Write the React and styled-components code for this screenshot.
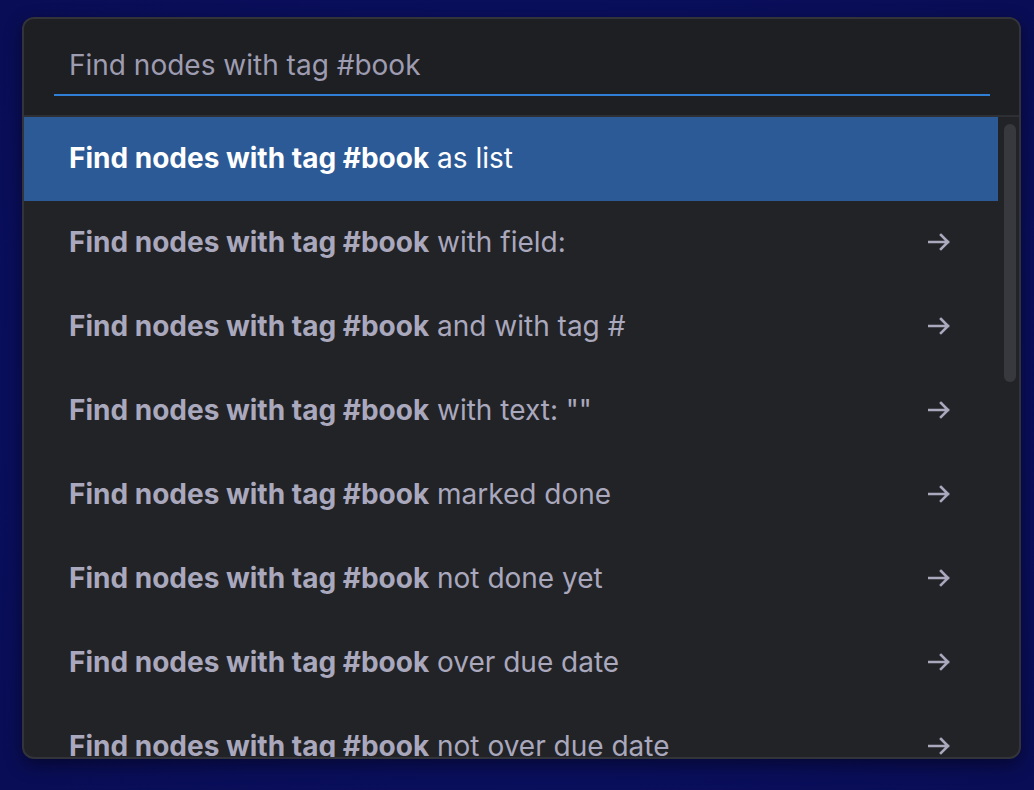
import React from "react";
import styled, { createGlobalStyle } from "styled-components";

const Global = createGlobalStyle`
  html, body { margin: 0; padding: 0; background: #0a0f5e; }
  body { font-family: Inter, "Noto Sans", sans-serif; -webkit-font-smoothing: antialiased; }
  #root { min-height: 790px; }
`;

const Page = styled.div`
  width: 1034px;
  height: 790px;
  padding: 17px 0 0 22px;
  box-sizing: border-box;
  background: radial-gradient(ellipse at center, #0b1166 0%, #0a0f5e 60%, #090d55 100%);
`;

const Panel = styled.div`
  width: 999px;
  height: 742px;
  box-sizing: border-box;
  border: 2px solid #333439;
  border-radius: 12px;
  background: #222327;
  overflow: hidden;
  display: flex;
  flex-direction: column;
  box-shadow: 0 6px 18px rgba(0, 0, 0, 0.45);
`;

const InputArea = styled.div`
  height: 96px;
  background: #1e1f23;
  padding: 0 29px 0 30px;
  display: flex;
  align-items: flex-start;
  border-bottom: 2px solid #2e2f34;
`;

const Input = styled.div`
  flex: 1;
  height: 77px;
  border-bottom: 2px solid #2f7fd6;
  padding-left: 15px;
  display: flex;
  align-items: flex-end;
  padding-bottom: 12px;
  box-sizing: border-box;
  font-size: 28px;
  color: #9e9cb1;
`;

const ListArea = styled.div`
  flex: 1;
  display: flex;
  min-height: 0;
`;

const Rows = styled.div`
  flex: 1;
  overflow: hidden;
`;

const Row = styled.div`
  height: 84px;
  box-sizing: border-box;
  display: flex;
  align-items: center;
  justify-content: space-between;
  padding: 0 48px 2px 45px;
  background: ${(p) => (p.$selected ? "#2c5a96" : "transparent")};
  color: ${(p) => (p.$selected ? "#ffffff" : "#aaa8bd")};
  font-size: 28px;
  white-space: nowrap;
`;

const Label = styled.span`
  b { font-weight: 700; }
`;

const Track = styled.div`
  width: 21px;
  padding: 7px 3px 0 6px;
  box-sizing: border-box;
`;

const Thumb = styled.div`
  width: 12px;
  height: 258px;
  border-radius: 6px;
  background: #38393e;
`;

const Arrow = () => (
  <svg width="22" height="18" viewBox="0 0 22 18" fill="none">
    <path d="M1 9 H20 M13 2 L20 9 L13 16" stroke="#aaa8bd" strokeWidth="2.6" strokeLinecap="square" strokeLinejoin="miter" />
  </svg>
);

const items = [
  { rest: "as list", arrow: false },
  { rest: "with field:", arrow: true },
  { rest: "and with tag #", arrow: true },
  { rest: 'with text: ""', arrow: true },
  { rest: "marked done", arrow: true },
  { rest: "not done yet", arrow: true },
  { rest: "over due date", arrow: true },
  { rest: "not over due date", arrow: true },
];

export default function App() {
  return (
    <>
      <Global />
      <Page>
        <Panel>
          <InputArea>
            <Input>Find nodes with tag #book</Input>
          </InputArea>
          <ListArea>
            <Rows>
              {items.map((it, i) => (
                <Row key={i} $selected={i === 0}>
                  <Label>
                    <b>Find nodes with tag #book</b> {it.rest}
                  </Label>
                  {it.arrow && <Arrow />}
                </Row>
              ))}
            </Rows>
            <Track>
              <Thumb />
            </Track>
          </ListArea>
        </Panel>
      </Page>
    </>
  );
}
